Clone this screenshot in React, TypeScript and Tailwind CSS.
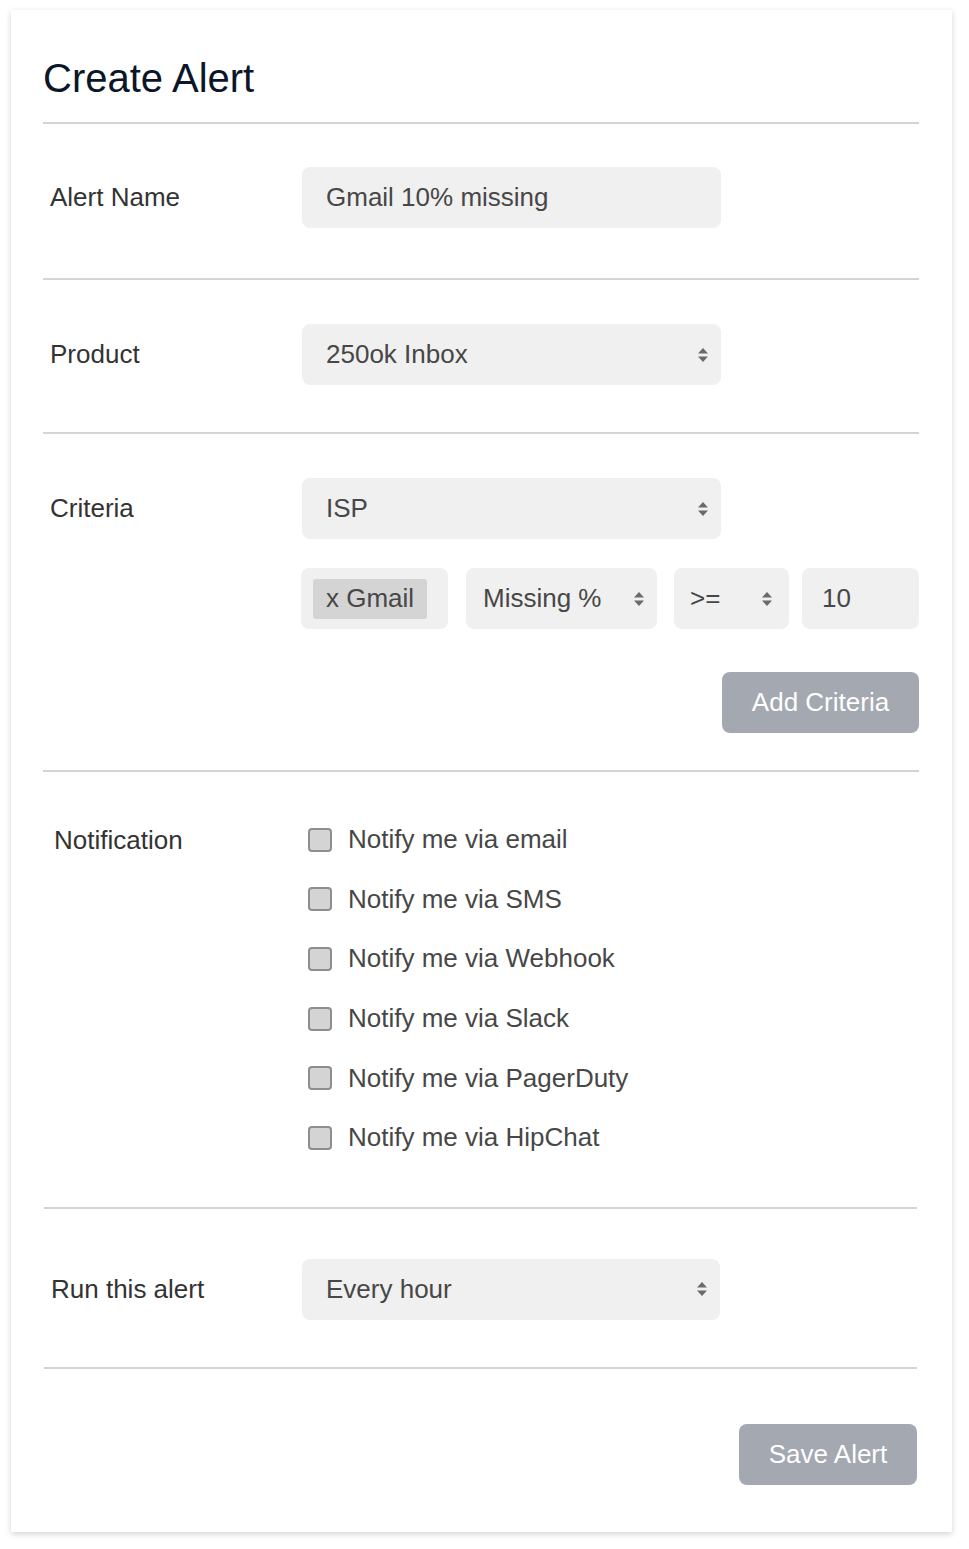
import React from 'react';

const font = { fontFamily: '"Liberation Sans", Arial, sans-serif' };

const SelectArrows: React.FC = () => (
  <svg width="12" height="16" viewBox="0 0 12 16" aria-hidden>
    <path d="M6 1 L11 6.5 H1 Z" fill="#6b6b6b" />
    <path d="M6 15 L11 9.5 H1 Z" fill="#6b6b6b" />
  </svg>
);

const Divider: React.FC<{ className?: string }> = ({ className = '' }) => (
  <div className={`h-[2px] bg-[#d4d4d4] ${className}`} />
);

const Select: React.FC<{ value: string; className?: string; padLeft?: string; padRight?: string }> = ({
  value,
  className = '',
  padLeft = 'pl-6',
  padRight = 'pr-3',
}) => (
  <div
    className={`h-[61px] bg-[#f0f0f0] rounded-lg flex items-center justify-between ${padLeft} ${padRight} text-[26px] text-[#474747] ${className}`}
  >
    <span>{value}</span>
    <SelectArrows />
  </div>
);

const Label: React.FC<{ children: React.ReactNode; className?: string }> = ({ children, className = '' }) => (
  <div className={`w-[259px] shrink-0 h-[61px] flex items-center text-[26px] text-[#333333] ${className}`}>
    {children}
  </div>
);

const Checkbox: React.FC = () => (
  <span className="w-6 h-6 rounded-[4px] border-2 border-[#8e8e8e] bg-[#d4d4d4] shrink-0" />
);

const channels = ['email', 'SMS', 'Webhook', 'Slack', 'PagerDuty', 'HipChat'];

export default function App() {
  return (
    <div className="min-h-screen bg-white pt-[10px] pl-[11px]" style={font}>
      <div className="w-[941px] bg-white shadow-[0_2px_6px_rgba(0,0,0,0.18)] pt-[44px] pl-8 pr-[33px] pb-[47px]">
        <h1 className="text-[40px] leading-[48px] text-[#0b1629] mb-5">Create Alert</h1>
        <Divider />

        <div className="flex items-center pt-[43px] pb-[50px]">
          <Label className="pl-[7px]">Alert Name</Label>
          <div className="w-[419px] h-[61px] bg-[#f0f0f0] rounded-lg flex items-center pl-6 text-[26px] text-[#474747]">
            Gmail 10% missing
          </div>
        </div>
        <Divider />

        <div className="flex items-center pt-[44px] pb-[47px]">
          <Label className="pl-[7px]">Product</Label>
          <Select value="250ok Inbox" className="w-[419px]" />
        </div>
        <Divider />

        <div className="flex items-start pt-[44px] pb-[37px]">
          <Label className="pl-[7px]">Criteria</Label>
          <div className="flex-1 flex flex-col">
            <Select value="ISP" className="w-[419px]" />
            <div className="flex items-center mt-[29px] -ml-[1px]">
              <div className="w-[147px] h-[61px] bg-[#f0f0f0] rounded-lg flex items-center pl-3">
                <span className="h-10 rounded-[3px] bg-[#d4d4d4] px-[13px] flex items-center text-[26px] text-[#474747]">
                  x Gmail
                </span>
              </div>
              <Select value="Missing %" className="w-[191px] ml-[18px]" padLeft="pl-[17px]" padRight="pr-[12px]" />
              <Select value=">=" className="w-[115px] ml-[17px]" padLeft="pl-4" padRight="pr-4" />
              <div className="w-[117px] h-[61px] ml-[13px] bg-[#f0f0f0] rounded-lg flex items-center pl-5 text-[26px] text-[#474747]">
                10
              </div>
            </div>
            <div className="flex justify-end mt-[43px]">
              <button className="w-[197px] h-[61px] rounded-lg bg-[#a3a8b1] text-white text-[26px]">
                Add Criteria
              </button>
            </div>
          </div>
        </div>
        <Divider />

        <div className="flex items-start pt-[38px] pb-[39px]">
          <div className="w-[265px] shrink-0 h-[60px] flex items-center pl-[11px] text-[26px] text-[#333333]">
            Notification
          </div>
          <div className="flex flex-col">
            {channels.map((c) => (
              <div key={c} className="h-[59.6px] flex items-center gap-4">
                <Checkbox />
                <span className="text-[26px] text-[#474747]">Notify me via {c}</span>
              </div>
            ))}
          </div>
        </div>
        <Divider className="ml-[1px] mr-[2px]" />

        <div className="flex items-center pt-[50px] pb-[47px]">
          <Label className="pl-[8px]">Run this alert</Label>
          <Select value="Every hour" className="w-[418px]" />
        </div>
        <Divider className="ml-[1px] mr-[2px]" />

        <div className="flex justify-end pt-[55px] pr-[2px]">
          <button className="w-[178px] h-[61px] rounded-lg bg-[#a3a8b1] text-white text-[26px]">
            Save Alert
          </button>
        </div>
      </div>
    </div>
  );
}
